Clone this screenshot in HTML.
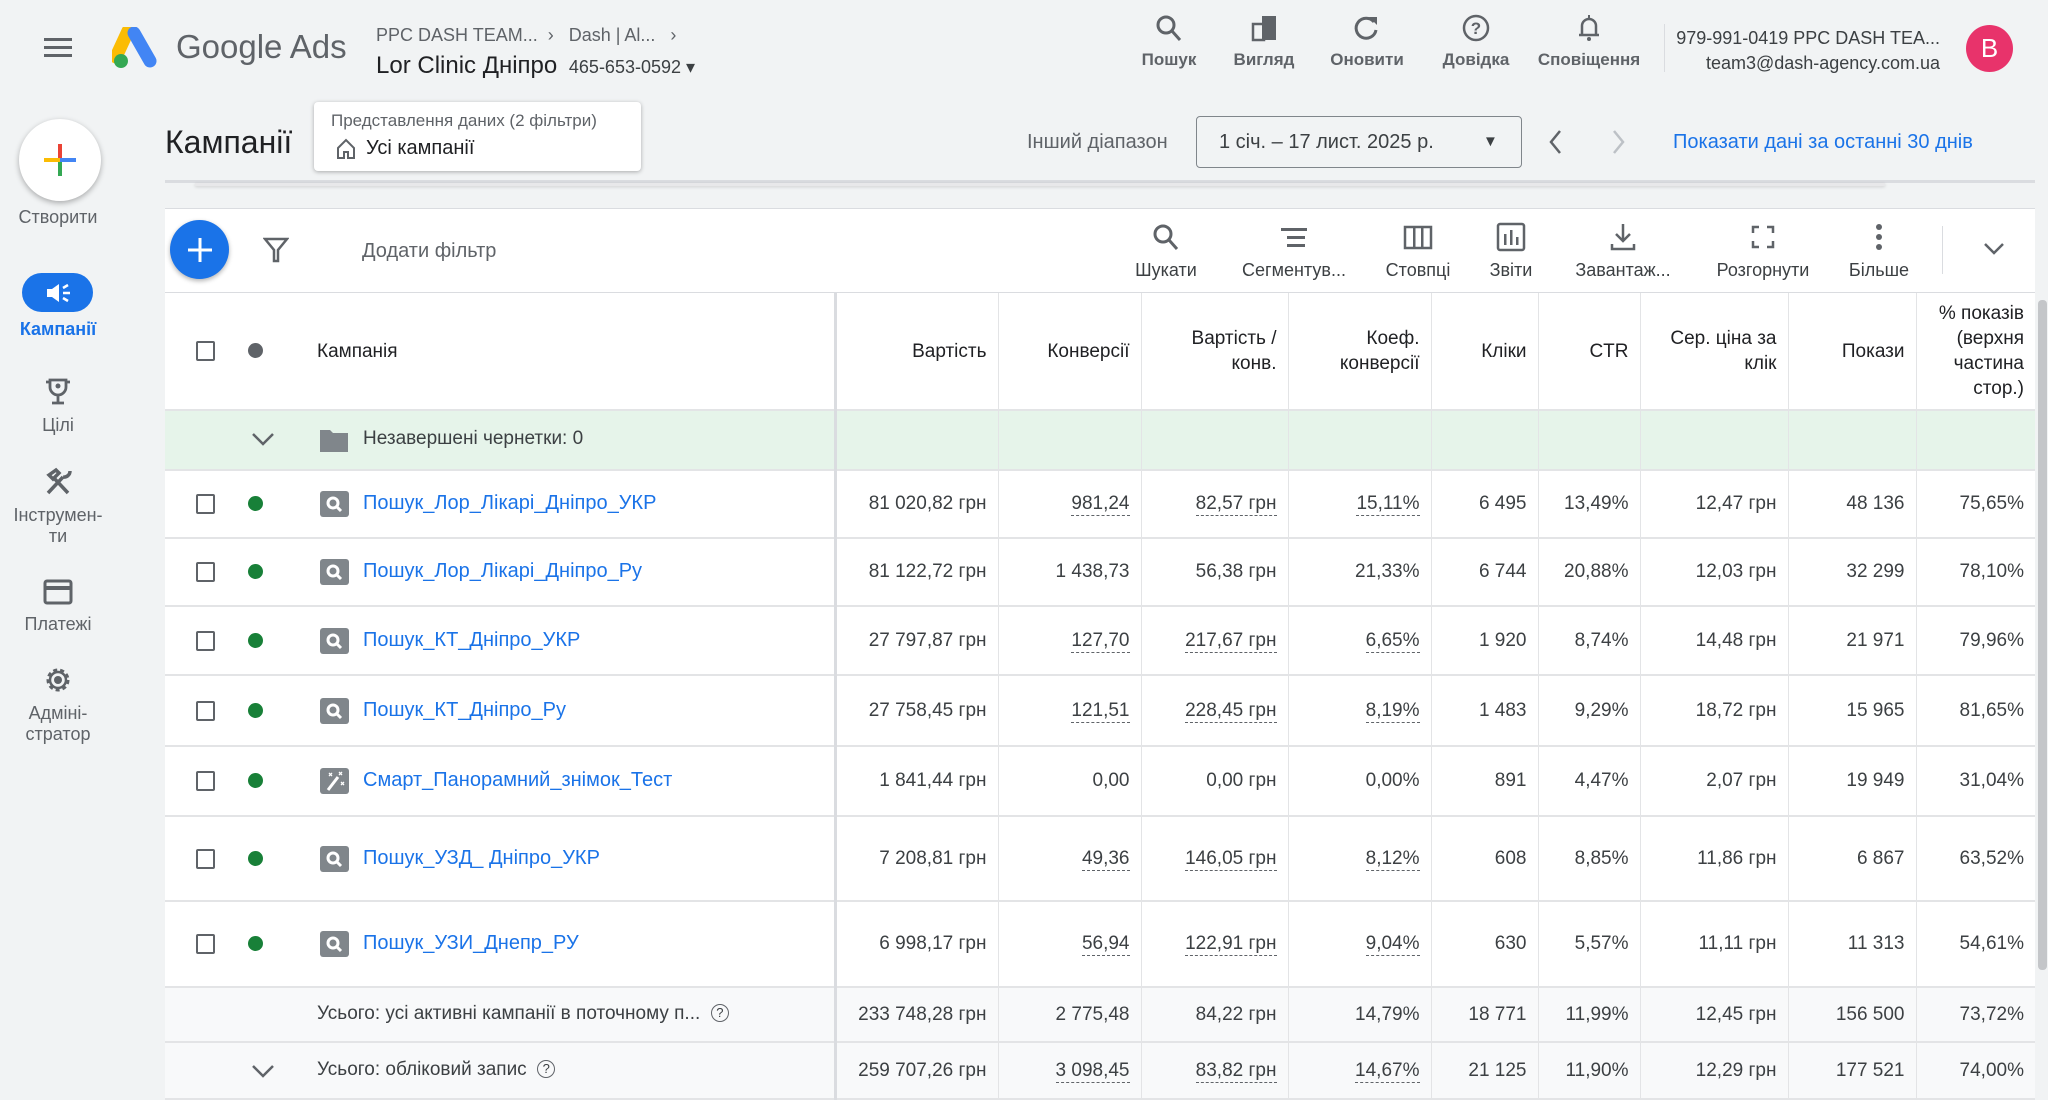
<!DOCTYPE html>
<html><head><meta charset="utf-8">
<style>
*{box-sizing:border-box;margin:0;padding:0}
body{width:2048px;height:1099px;overflow:hidden;background:#f1f3f4;font-family:"Liberation Sans","Noto Sans CJK SC",sans-serif;color:#3c4043;position:relative}
.a{position:absolute}
.tb{position:absolute;text-align:center;font-size:17px;font-weight:bold;color:#5f6368;width:120px}
.tb svg{display:block;margin:0 auto 8px}
.nav{position:absolute;left:0;width:116px;text-align:center;font-size:18px;color:#5f6368;line-height:21px}
.nav svg{display:block;margin:0 auto 8px}
table{position:absolute;left:165px;top:293px;width:1870px;border-collapse:collapse;table-layout:fixed;background:#fff;font-size:19px}
td,th{border-bottom:2px solid #e3e4e6;border-left:1px solid #e3e4e6;text-align:right;padding:0 11px;white-space:nowrap;overflow:hidden}
th{font-weight:normal;color:#202124;font-size:19px;line-height:25px;vertical-align:middle}
td:first-child,th:first-child{border-left:none;text-align:left;position:relative;padding:0}
td:nth-child(2),th:nth-child(2){border-left:3px solid #dadce0}
.u{border-bottom:1px dashed #5f6368;padding-bottom:1px}
.cb{position:absolute;left:31px;width:19px;height:20px;border:2px solid #5f6368;border-radius:2px;top:50%;margin-top:-10px}
.dot{position:absolute;left:83px;width:15px;height:15px;border-radius:50%;background:#188038;top:50%;margin-top:-8px}
.ic{position:absolute;left:155px;top:50%;margin-top:-13px}
.nm{position:absolute;left:198px;top:50%;margin-top:-12px;color:#1a73e8;font-size:20px}
.tt{position:absolute;left:152px;top:50%;margin-top:-12px;font-size:19px}
.tot td{background:#f8f9fa}
</style></head><body>

<svg class="a" style="left:44px;top:38px" width="28" height="20"><rect y="0" width="28" height="3" fill="#5f6368"/><rect y="8" width="28" height="3" fill="#5f6368"/><rect y="16" width="28" height="3" fill="#5f6368"/></svg>
<svg class="a" style="left:112px;top:27px" width="46" height="41" viewBox="0 0 46 41">
<path d="M16 4 L4 30" stroke="#fbbc04" stroke-width="13" stroke-linecap="round"/>
<path d="M22 6 L38 34" stroke="#4285f4" stroke-width="13" stroke-linecap="round"/>
<circle cx="9" cy="34" r="7" fill="#34a853"/></svg>
<div class="a" style="left:176px;top:28px;font-size:33px;color:#5f6368">Google Ads</div>
<div class="a" style="left:376px;top:25px;font-size:18px;color:#5f6368">PPC DASH TEAM...&nbsp; ›&nbsp;&nbsp; Dash | Al...&nbsp;&nbsp; ›</div>
<div class="a" style="left:376px;top:52px;font-size:24px;color:#202124">Lor Clinic Дніпро <span style="font-size:18px;color:#3c4043">&nbsp;465-653-0592 ▾</span></div>

<div class="tb" style="left:1109px;top:14px"><svg width="30" height="28" viewBox="0 0 30 28"><circle cx="12" cy="11" r="8" fill="none" stroke="#5f6368" stroke-width="3"/><path d="M18 17 L26 26" stroke="#5f6368" stroke-width="3"/></svg>Пошук</div>
<div class="tb" style="left:1204px;top:14px"><svg width="30" height="28"><rect x="4" y="10" width="11" height="16" fill="none" stroke="#5f6368" stroke-width="2.5"/><rect x="13" y="2" width="14" height="24" fill="#5f6368"/></svg>Вигляд</div>
<div class="tb" style="left:1307px;top:14px"><svg width="30" height="28" viewBox="0 0 30 28"><path d="M22 8 A10 10 0 1 0 24 16" fill="none" stroke="#5f6368" stroke-width="3"/><path d="M17 3 L25 3 L25 11 Z" fill="#5f6368"/></svg>Оновити</div>
<div class="tb" style="left:1416px;top:14px"><svg width="30" height="28"><circle cx="15" cy="14" r="12" fill="none" stroke="#5f6368" stroke-width="2.5"/><text x="15" y="20" font-size="17" text-anchor="middle" fill="#5f6368" font-family="Liberation Sans">?</text></svg>Довідка</div>
<div class="tb" style="left:1529px;top:14px"><svg width="30" height="28" viewBox="0 0 30 28"><path d="M8 21 L8 12 A7 7 0 0 1 22 12 L22 21 Z M5 21 L25 21" fill="none" stroke="#5f6368" stroke-width="2.5"/><circle cx="15" cy="25" r="2" fill="#5f6368"/><rect x="14" y="1" width="2" height="4" fill="#5f6368"/></svg>Сповіщення</div>
<div class="a" style="left:1664px;top:24px;width:1px;height:48px;background:#dadce0"></div>
<div class="a" style="left:1670px;top:26px;width:270px;text-align:right;font-size:18px;color:#3c4043;line-height:25px">979-991-0419 PPC DASH TEA...<br>team3@dash-agency.com.ua</div>
<div class="a" style="left:1966px;top:25px;width:47px;height:47px;border-radius:50%;background:#e8336b;color:#fff;font-size:26px;text-align:center;line-height:47px">B</div>

<div class="a" style="left:19px;top:119px;width:82px;height:82px;border-radius:50%;background:#fff;box-shadow:0 2px 6px rgba(0,0,0,.3)"></div>
<svg class="a" style="left:42px;top:142px" width="36" height="36"><rect x="16" y="2" width="4" height="16" fill="#ea4335"/><rect x="16" y="18" width="4" height="16" fill="#34a853"/><rect x="2" y="16" width="16" height="4" fill="#fbbc04"/><rect x="18" y="16" width="16" height="4" fill="#4285f4"/></svg>
<div class="nav" style="top:207px">Створити</div>
<div class="a" style="left:22px;top:273px;width:71px;height:39px;border-radius:20px;background:#1a73e8"></div>
<svg class="a" style="left:44px;top:281px" width="28" height="24" viewBox="0 0 28 24"><path d="M3 8 H8 L15 3 V21 L8 16 H3 Z" fill="#fff"/><path d="M19 7 L24 4 M19 12 H26 M19 17 L24 20" stroke="#fff" stroke-width="2.5"/></svg>
<div class="nav" style="top:319px;color:#1a73e8;font-weight:bold">Кампанії</div>
<div class="nav" style="top:377px"><svg width="30" height="30" viewBox="0 0 30 30"><path d="M7 3 H23 V10 A8 8 0 0 1 7 10 Z M3 5 H7 V10 M27 5 H23 V10 M15 18 V25 M9 26 H21" fill="none" stroke="#5f6368" stroke-width="2.8"/><circle cx="15" cy="9" r="2.5" fill="#5f6368"/></svg>Цілі</div>
<div class="nav" style="top:467px"><svg width="30" height="30" viewBox="0 0 30 30"><path d="M5 26 L20 10 M10 10 L25 26 M6 8 L13 3 L16 6 L10 12 Z M20 10 A6 6 0 0 0 27 4" fill="none" stroke="#5f6368" stroke-width="3.5"/></svg>Інструмен-<br>ти</div>
<div class="nav" style="top:578px"><svg width="30" height="28"><rect x="2" y="3" width="26" height="22" rx="2" fill="none" stroke="#5f6368" stroke-width="3"/><rect x="2" y="8" width="26" height="4" fill="#5f6368"/></svg>Платежі</div>
<div class="nav" style="top:665px"><svg width="30" height="30" viewBox="0 0 30 30"><circle cx="15" cy="15" r="10" fill="none" stroke="#5f6368" stroke-width="3" stroke-dasharray="4 3"/><circle cx="15" cy="15" r="8" fill="none" stroke="#5f6368" stroke-width="2.5"/><circle cx="15" cy="15" r="4" fill="#5f6368"/></svg>Адміні-<br>стратор</div>

<div class="a" style="left:165px;top:124px;font-size:32px;color:#202124">Кампанії</div>
<div class="a" style="left:314px;top:102px;width:327px;height:69px;background:#fff;border-radius:4px;box-shadow:0 1px 4px rgba(0,0,0,.3)"></div>
<div class="a" style="left:331px;top:111px;font-size:17px;color:#5f6368">Представлення даних (2 фільтри)</div>
<svg class="a" style="left:336px;top:138px" width="20" height="22"><path d="M2 10 L10 2 L18 10 V20 H12 V14 H8 V20 H2 Z" fill="none" stroke="#5f6368" stroke-width="2"/></svg>
<div class="a" style="left:366px;top:137px;font-size:20px;color:#202124">Усі кампанії</div>
<div class="a" style="left:1027px;top:131px;font-size:20px;color:#5f6368">Інший діапазон</div>
<div class="a" style="left:1196px;top:116px;width:326px;height:52px;border:1px solid #80868b;border-radius:4px"></div>
<div class="a" style="left:1219px;top:131px;font-size:20px;color:#3c4043">1 січ. – 17 лист. 2025 р.</div>
<div class="a" style="left:1483px;top:133px;font-size:15px;color:#3c4043">▼</div>
<svg class="a" style="left:1548px;top:129px" width="16" height="26"><path d="M12 2 L3 13 L12 24" fill="none" stroke="#5f6368" stroke-width="2.5"/></svg>
<svg class="a" style="left:1610px;top:129px" width="16" height="26"><path d="M4 2 L13 13 L4 24" fill="none" stroke="#bdc1c6" stroke-width="2.5"/></svg>
<div class="a" style="left:1673px;top:131px;font-size:20px;color:#1a73e8">Показати дані за останні 30 днів</div>
<div class="a" style="left:165px;top:180px;width:1870px;height:3px;background:#dadce0"></div>
<div class="a" style="left:195px;top:183px;width:1690px;height:3px;background:#e8e8ea;box-shadow:0 1px 3px rgba(0,0,0,.15)"></div>

<div class="a" style="left:165px;top:208px;width:1870px;height:85px;background:#fff;border-top:1px solid #dadce0;border-bottom:1px solid #dadce0"></div>
<div class="a" style="left:170px;top:220px;width:59px;height:59px;border-radius:50%;background:#1a73e8;box-shadow:0 2px 5px rgba(0,0,0,.3)"></div>
<svg class="a" style="left:186px;top:236px" width="28" height="28"><rect x="12.5" y="2" width="3" height="24" fill="#fff"/><rect x="2" y="12.5" width="24" height="3" fill="#fff"/></svg>
<svg class="a" style="left:263px;top:236px" width="26" height="28"><path d="M2 3 H24 L15 14 V25 H11 V14 Z" fill="none" stroke="#5f6368" stroke-width="2.5"/></svg>
<div class="a" style="left:362px;top:240px;font-size:20px;color:#5f6368">Додати фільтр</div>

<div class="tb" style="left:1106px;top:222px;font-weight:normal;font-size:18px;color:#3c4043"><svg width="30" height="30" viewBox="0 0 30 28"><circle cx="12" cy="11" r="8" fill="none" stroke="#5f6368" stroke-width="3"/><path d="M18 17 L26 26" stroke="#5f6368" stroke-width="3"/></svg>Шукати</div>
<div class="tb" style="left:1234px;top:222px;font-weight:normal;font-size:18px;color:#3c4043"><svg width="30" height="30"><rect x="2" y="6" width="26" height="3" fill="#5f6368"/><rect x="8" y="14" width="18" height="3" fill="#5f6368"/><rect x="8" y="22" width="18" height="3" fill="#5f6368"/></svg>Сегментув...</div>
<div class="tb" style="left:1358px;top:222px;font-weight:normal;font-size:18px;color:#3c4043"><svg width="30" height="30"><rect x="2" y="5" width="26" height="21" fill="none" stroke="#5f6368" stroke-width="2.5"/><rect x="10" y="5" width="2.5" height="21" fill="#5f6368"/><rect x="18" y="5" width="2.5" height="21" fill="#5f6368"/></svg>Стовпці</div>
<div class="tb" style="left:1451px;top:222px;font-weight:normal;font-size:18px;color:#3c4043"><svg width="30" height="30"><rect x="2" y="2" width="26" height="26" rx="2" fill="none" stroke="#5f6368" stroke-width="2.5"/><rect x="8" y="12" width="2.5" height="11" fill="#5f6368"/><rect x="14" y="8" width="2.5" height="15" fill="#5f6368"/><rect x="20" y="15" width="2.5" height="8" fill="#5f6368"/></svg>Звіти</div>
<div class="tb" style="left:1563px;top:222px;font-weight:normal;font-size:18px;color:#3c4043"><svg width="30" height="30"><path d="M15 2 V19 M8 12 L15 19 L22 12 M4 22 V27 H26 V22" fill="none" stroke="#5f6368" stroke-width="2.5"/></svg>Завантаж...</div>
<div class="tb" style="left:1703px;top:222px;font-weight:normal;font-size:18px;color:#3c4043"><svg width="30" height="30"><path d="M5 11 V5 H11 M19 5 H25 V11 M25 19 V25 H19 M11 25 H5 V19" fill="none" stroke="#5f6368" stroke-width="2.5"/></svg>Розгорнути</div>
<div class="tb" style="left:1819px;top:222px;font-weight:normal;font-size:18px;color:#3c4043"><svg width="30" height="30"><circle cx="15" cy="5" r="3" fill="#5f6368"/><circle cx="15" cy="15" r="3" fill="#5f6368"/><circle cx="15" cy="25" r="3" fill="#5f6368"/></svg>Більше</div>
<div class="a" style="left:1942px;top:226px;width:1px;height:48px;background:#dadce0"></div>
<svg class="a" style="left:1983px;top:242px" width="22" height="14"><path d="M2 2 L11 11 L20 2" fill="none" stroke="#5f6368" stroke-width="2.5"/></svg>

<svg width="0" height="0" style="position:absolute"><defs>
<symbol id="sq" viewBox="0 0 29 26"><rect width="29" height="26" rx="3" fill="#80868b"/><circle cx="13" cy="12" r="5" fill="none" stroke="#fff" stroke-width="3"/><path d="M16 15 L21 20" stroke="#fff" stroke-width="3"/></symbol>
<symbol id="wd" viewBox="0 0 29 26"><rect width="29" height="26" rx="3" fill="#80868b"/><path d="M8 22 L18 9" stroke="#fff" stroke-width="3"/><path d="M9 5 L12 8 M12 5 L9 8 M19 4 L22 7 M22 4 L19 7 M21 14 L24 17 M24 14 L21 17" stroke="#fff" stroke-width="1.3"/></symbol>
</defs></svg>

<table>
<colgroup><col style="width:670px"><col style="width:163px"><col style="width:143px"><col style="width:147px"><col style="width:143px"><col style="width:107px"><col style="width:102px"><col style="width:148px"><col style="width:128px"><col style="width:119px"></colgroup>
<tr style="height:117px"><th><span class="cb"></span><span class="dot" style="background:#5f6368"></span><span class="tt" style="left:152px;color:#202124">Кампанія</span></th><th>Вартість</th><th>Конверсії</th><th>Вартість /<br>конв.</th><th>Коеф.<br>конверсії</th><th>Кліки</th><th>CTR</th><th>Сер. ціна за<br>клік</th><th>Покази</th><th>% показів<br>(верхня<br>частина<br>стор.)</th></tr>
<tr style="height:60px;background:#e6f4ea"><td style="background:#e6f4ea"><svg style="position:absolute;left:86px;top:20px" width="24" height="16"><path d="M2 3 L12 13 L22 3" fill="none" stroke="#5f6368" stroke-width="2.5"/></svg><svg style="position:absolute;left:154px;top:16px" width="30" height="26"><path d="M1 3 H11 L14 6 H29 V25 H1 Z" fill="#80868b"/></svg><span class="tt" style="left:198px">Незавершені чернетки: 0</span></td><td></td><td></td><td></td><td></td><td></td><td></td><td></td><td></td><td></td></tr>
<tr style="height:68px"><td><span class="cb"></span><span class="dot"></span><svg class="ic" width="29" height="26"><use href="#sq"/></svg><span class="nm">Пошук_Лор_Лікарі_Дніпро_УКР</span></td><td>81 020,82 грн</td><td><span class="u">981,24</span></td><td><span class="u">82,57 грн</span></td><td><span class="u">15,11%</span></td><td>6 495</td><td>13,49%</td><td>12,47 грн</td><td>48 136</td><td>75,65%</td></tr>
<tr style="height:68px"><td><span class="cb"></span><span class="dot"></span><svg class="ic" width="29" height="26"><use href="#sq"/></svg><span class="nm">Пошук_Лор_Лікарі_Дніпро_Ру</span></td><td>81 122,72 грн</td><td>1 438,73</td><td>56,38 грн</td><td>21,33%</td><td>6 744</td><td>20,88%</td><td>12,03 грн</td><td>32 299</td><td>78,10%</td></tr>
<tr style="height:69px"><td><span class="cb"></span><span class="dot"></span><svg class="ic" width="29" height="26"><use href="#sq"/></svg><span class="nm">Пошук_КТ_Дніпро_УКР</span></td><td>27 797,87 грн</td><td><span class="u">127,70</span></td><td><span class="u">217,67 грн</span></td><td><span class="u">6,65%</span></td><td>1 920</td><td>8,74%</td><td>14,48 грн</td><td>21 971</td><td>79,96%</td></tr>
<tr style="height:71px"><td><span class="cb"></span><span class="dot"></span><svg class="ic" width="29" height="26"><use href="#sq"/></svg><span class="nm">Пошук_КТ_Дніпро_Ру</span></td><td>27 758,45 грн</td><td><span class="u">121,51</span></td><td><span class="u">228,45 грн</span></td><td><span class="u">8,19%</span></td><td>1 483</td><td>9,29%</td><td>18,72 грн</td><td>15 965</td><td>81,65%</td></tr>
<tr style="height:70px"><td><span class="cb"></span><span class="dot"></span><svg class="ic" width="29" height="26"><use href="#wd"/></svg><span class="nm">Смарт_Панорамний_знімок_Тест</span></td><td>1 841,44 грн</td><td>0,00</td><td>0,00 грн</td><td>0,00%</td><td>891</td><td>4,47%</td><td>2,07 грн</td><td>19 949</td><td>31,04%</td></tr>
<tr style="height:85px"><td><span class="cb"></span><span class="dot"></span><svg class="ic" width="29" height="26"><use href="#sq"/></svg><span class="nm">Пошук_УЗД_ Дніпро_УКР</span></td><td>7 208,81 грн</td><td><span class="u">49,36</span></td><td><span class="u">146,05 грн</span></td><td><span class="u">8,12%</span></td><td>608</td><td>8,85%</td><td>11,86 грн</td><td>6 867</td><td>63,52%</td></tr>
<tr style="height:86px"><td><span class="cb"></span><span class="dot"></span><svg class="ic" width="29" height="26"><use href="#sq"/></svg><span class="nm">Пошук_УЗИ_Днепр_РУ</span></td><td>6 998,17 грн</td><td><span class="u">56,94</span></td><td><span class="u">122,91 грн</span></td><td><span class="u">9,04%</span></td><td>630</td><td>5,57%</td><td>11,11 грн</td><td>11 313</td><td>54,61%</td></tr>
<tr class="tot" style="height:55px"><td><span class="tt">Усього: усі активні кампанії в поточному п... &nbsp;<span style="display:inline-block;width:18px;height:18px;border:1.5px solid #5f6368;border-radius:50%;font-size:13px;text-align:center;line-height:16px;vertical-align:2px">?</span></span></td><td>233 748,28 грн</td><td>2 775,48</td><td>84,22 грн</td><td>14,79%</td><td>18 771</td><td>11,99%</td><td>12,45 грн</td><td>156 500</td><td>73,72%</td></tr>
<tr class="tot" style="height:57px"><td><svg style="position:absolute;left:86px;top:20px" width="24" height="16"><path d="M2 3 L12 13 L22 3" fill="none" stroke="#5f6368" stroke-width="2.5"/></svg><span class="tt">Усього: обліковий запис &nbsp;<span style="display:inline-block;width:18px;height:18px;border:1.5px solid #5f6368;border-radius:50%;font-size:13px;text-align:center;line-height:16px;vertical-align:2px">?</span></span></td><td>259 707,26 грн</td><td><span class="u">3 098,45</span></td><td><span class="u">83,82 грн</span></td><td><span class="u">14,67%</span></td><td>21 125</td><td>11,90%</td><td>12,29 грн</td><td>177 521</td><td>74,00%</td></tr>
</table>
<div class="a" style="left:2037px;top:293px;width:11px;height:806px;background:#f1f3f4"></div>
<div class="a" style="left:2038px;top:300px;width:9px;height:670px;background:#c4c6c9;border-radius:4px"></div>
</body></html>
